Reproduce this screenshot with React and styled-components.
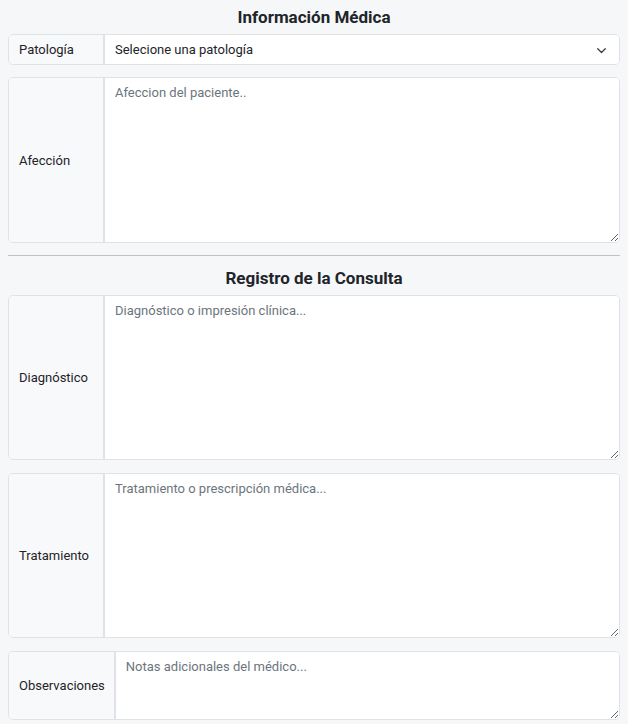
import React from "react";
import styled, { createGlobalStyle } from "styled-components";

const Global = createGlobalStyle`
  html, body { background: #f6f7f9; }
  body {
    margin: 8px;
    font-family: Roboto, "Liberation Sans", Arial, sans-serif;
    color: #212529;
  }
  * { box-sizing: border-box; }
`;

const Form = styled.div`
  display: flex;
  flex-direction: column;
`;

const Title = styled.h5`
  margin: 0 0 7px;
  font-size: 17px;
  line-height: 19px;
  font-weight: 700;
  text-align: center;
  color: #212529;
`;

const Divider = styled.hr`
  width: 100%;
  margin: 12px 0 13px;
  border: 0;
  border-top: 1px solid #bfc3c7;
`;

const Group = styled.div`
  display: flex;
  align-items: stretch;
  width: 100%;
  margin-bottom: ${(p) => p.$gap ?? 12}px;
  border: 1px solid #dfe2e6;
  border-radius: 5px;
  overflow: hidden;
  background: #fff;
`;

const Label = styled.label`
  display: flex;
  align-items: center;
  flex: 0 0 auto;
  min-width: 95px;
  padding: 0 9px 0 10px;
  background: #f8f9fa;
  border-right: 1px solid #dfe2e6;
  font-size: 13px;
  color: #1f2327;
  white-space: nowrap;
`;

const SelectWrap = styled.div`
  position: relative;
  flex: 1 1 auto;
  display: flex;
`;

const Select = styled.select`
  flex: 1;
  height: 29px;
  appearance: none;
  border: 0;
  outline: none;
  background: #fff;
  padding: 0 32px 0 10px;
  font-family: inherit;
  font-size: 13px;
  color: #212529;
  border-left: 1px solid #dfe2e6;
`;

const Chevron = styled.svg`
  position: absolute;
  right: 12px;
  top: 50%;
  width: 11px;
  height: 11px;
  margin-top: -5px;
  pointer-events: none;
`;

const Area = styled.textarea`
  flex: 1 1 auto;
  height: ${(p) => p.$h}px;
  border: 0;
  border-left: 1px solid #dfe2e6;
  outline: none;
  background: #fff;
  padding: 6px 10px;
  margin: 0;
  font-family: inherit;
  font-size: 13px;
  line-height: 18px;
  color: #212529;
  resize: vertical;
  display: block;
  &::placeholder { color: #6c757d; opacity: 1; }
`;

function TextGroup({ label, placeholder, h, gap }) {
  return (
    <Group $gap={gap}>
      <Label>{label}</Label>
      <Area placeholder={placeholder} $h={h} />
    </Group>
  );
}

export default function App() {
  return (
    <>
      <Global />
      <Form>
        <Title>Información Médica</Title>
        <Group>
          <Label>Patología</Label>
          <SelectWrap>
            <Select defaultValue="">
              <option value="">Selecione una patología</option>
            </Select>
            <Chevron viewBox="0 0 16 16">
              <path d="M2.5 5.5L8 11l5.5-5.5" fill="none" stroke="#343a40" strokeWidth="1.8" strokeLinecap="round" strokeLinejoin="round" />
            </Chevron>
          </SelectWrap>
        </Group>
        <TextGroup label="Afección" placeholder="Afeccion del paciente.." h={164} gap={0} />
        <Divider />
        <Title>Registro de la Consulta</Title>
        <TextGroup label="Diagnóstico" placeholder="Diagnóstico o impresión clínica..." h={163} gap={13} />
        <TextGroup label="Tratamiento" placeholder="Tratamiento o prescripción médica..." h={163} gap={13} />
        <TextGroup label="Observaciones" placeholder="Notas adicionales del médico..." h={67} gap={0} />
      </Form>
    </>
  );
}
